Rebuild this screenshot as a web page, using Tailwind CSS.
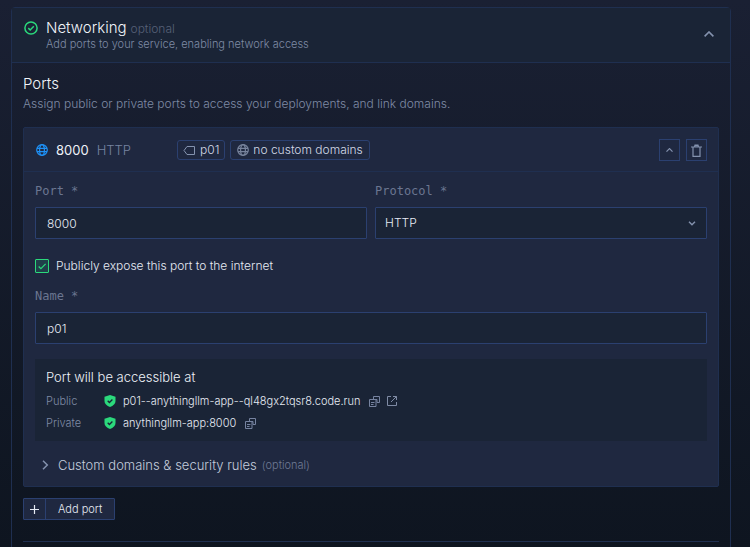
<!DOCTYPE html>
<html lang="en">
<head>
    <meta charset="UTF-8">
    <meta name="viewport" content="width=device-width, initial-scale=1.0">
    <title>Networking</title>
    <script src="https://cdn.jsdelivr.net/npm/@tailwindcss/browser@4"></script>
</head>
<body class="h-screen overflow-hidden bg-linear-to-b from-[#1a2033] to-[#0e1520] pt-[7px] pr-[19px] pl-[11px] font-['Inter',sans-serif] text-[13px] leading-4 font-light text-[#e6ebf4]">
    <!-- shared icons -->
    <svg class="hidden">
        <symbol id="globe" viewBox="0 0 12 12" fill="none" stroke="currentColor" stroke-width="1.2">
            <circle cx="6" cy="6" r="5.3" />
            <ellipse cx="6" cy="6" rx="2.4" ry="5.3" />
            <path d="M1 4.3h10M1 7.7h10" />
        </symbol>
        <symbol id="shield" viewBox="0 0 12 12">
            <path d="M6 0 11.5 1.8V6c0 2.7-2.2 4.8-5.5 6C2.7 10.8.5 8.7.5 6V1.8Z" fill="#2bd97c" />
            <path d="m3.7 5.8 1.7 1.7 3-3" fill="none" stroke="#1a2436" stroke-width="1.3" />
        </symbol>
        <symbol id="copy" viewBox="0 0 11 11" fill="none" stroke="currentColor">
            <path d="M4.5 3.500V.5h6v6H8M.5 3.500h3.500l3 0v7H.5ZM2 6.500h3.500M2 8.500h2.500M6.500 3.500h1.500v3" />
        </symbol>
    </svg>

    <section class="min-h-screen rounded-t border border-[#1f2f50]">
        <header class="flex items-center justify-between border-b border-[#1f2f50] bg-[#1a2436] pt-3 pr-4 pb-[10px] pl-3">
            <div class="flex gap-2">
                <svg class="mt-[1px] size-[14px] text-[#2bd97c]" viewBox="0 0 14 14" fill="none" stroke="currentColor" stroke-width="1.5">
                    <circle cx="7" cy="7" r="6.1" />
                    <path d="m4.3 7.1 1.9 1.9 3.6-3.7" />
                </svg>
                <div>
                    <h1 class="flex h-4 items-baseline gap-1 text-[15px] leading-4 text-[#f2f5fa]">Networking <span class="text-[12px] text-[#566076]">optional</span></h1>
                    <p class="text-[11px] leading-4 text-[#7f8ba5]">Add ports to your service, enabling network access</p>
                </div>
            </div>
            <button type="button" aria-label="Collapse networking" class="mb-1 text-[#8492ae]">
                <svg class="h-[6px] w-[10px]" viewBox="0 0 10 6" fill="none" stroke="currentColor" stroke-width="1.6"><path d="m.6 5.4 4.4-4.4 4.4 4.4" /></svg>
            </button>
        </header>

        <div class="px-[11px] pt-[11px]">
            <h2 class="text-[15px] leading-5 text-[#f2f5fa]">Ports</h2>
            <p class="mt-[2px] text-[12px] leading-4 text-[#7f8ba5]">Assign public or private ports to access your deployments, and link domains.</p>

            <div class="mt-[15px] rounded-xs border border-[#1f2f50] bg-[#1f2840]">
                <div class="flex items-center border-b border-[#1f2f50] pt-[11px] pr-[11px] pb-[10px] pl-3">
                    <div class="flex w-[141px] items-center gap-2">
                        <svg class="size-3 text-[#1e90f5]"><use href="#globe" /></svg>
                        <span class="font-normal text-[#eef2f8]">8000</span>
                        <span class="text-[#7683a0]">HTTP</span>
                    </div>
                    <div class="flex flex-1 gap-[5px] text-[12px] text-[#d3dae7]">
                        <span class="flex h-5 items-center gap-[5px] rounded-[3px] border border-[#2b4070] px-[5px]">
                            <svg class="h-[9px] w-3 text-[#8492ae]" viewBox="0 0 12 9" fill="none" stroke="currentColor"><path d="M4 .5h7.500v8H4l-3-4Z" /></svg>
                            p01
                        </span>
                        <span class="flex h-5 items-center gap-1 rounded-[3px] border border-[#2b4070] px-[6px]">
                            <svg class="size-3 text-[#77839c]"><use href="#globe" /></svg>
                            no custom domains
                        </span>
                    </div>
                    <div class="flex gap-[6px] text-[#8492ae]">
                        <button type="button" aria-label="Collapse port" class="flex h-[22px] w-[21px] items-center justify-center border border-[#2b4070]">
                            <svg class="h-1 w-[7px]" viewBox="0 0 7 4" fill="none" stroke="currentColor" stroke-width="1.2"><path d="m.5 3.600 3-3 3 3" /></svg>
                        </button>
                        <button type="button" aria-label="Delete port" class="flex h-[22px] w-[21px] items-center justify-center border border-[#2b4070]">
                            <svg class="h-[13px] w-[11px]" viewBox="0 0 11 13" fill="none" stroke="currentColor" stroke-width="1.2"><path d="M0 3h11M2 3v9.300h7V3M3.500 3l.5-2h3l.5 2M3.500 1.700h4" /></svg>
                        </button>
                    </div>
                </div>

                <div class="px-[11px] pt-[11px] pb-[13px]">
                    <div class="grid grid-cols-2 gap-2">
                        <div>
                            <label for="port" class="block font-['DejaVu_Sans_Mono',monospace] text-[12px] text-[#6b7690]">Port *</label>
                            <input id="port" type="text" value="8000" class="mt-2 block h-8 w-full rounded-[1px] border border-[#2b4070] bg-[#1a2436] px-[11px] text-[12px]">
                        </div>
                        <div>
                            <label for="protocol" class="block font-['DejaVu_Sans_Mono',monospace] text-[12px] text-[#6b7690]">Protocol *</label>
                            <div class="relative mt-2">
                                <select id="protocol" class="block h-8 w-full appearance-none rounded-[1px] border border-[#2b4070] bg-[#1a2436] px-[9px] text-[12px]">
                                    <option>HTTP</option>
                                    <option>TCP</option>
                                    <option>UDP</option>
                                </select>
                                <svg class="pointer-events-none absolute top-[14px] right-[11px] h-[5px] w-2 text-[#8492ae]" viewBox="0 0 8 5" fill="none" stroke="currentColor" stroke-width="1.4"><path d="m1 .8 3 3 3-3" /></svg>
                            </div>
                        </div>
                    </div>

                    <label class="mt-[19px] flex items-center gap-[7px] text-[12px]">
                        <span class="relative size-[14px]">
                            <input type="checkbox" checked class="block size-[14px] appearance-none rounded-[1px] border border-[#2bd97c] bg-[#20404a]">
                            <svg class="pointer-events-none absolute inset-0 size-[14px]" viewBox="0 0 14 14" fill="none" stroke="#2bd97c" stroke-width="1.2"><path d="m3.700 7.500 2.200 2.200 4.700-4.800" /></svg>
                        </span>
                        Publicly expose this port to the internet
                    </label>

                    <label for="name" class="mt-[14px] block font-['DejaVu_Sans_Mono',monospace] text-[12px] text-[#6b7690]">Name *</label>
                    <input id="name" type="text" value="p01" class="mt-2 block h-8 w-full rounded-[1px] border border-[#2b4070] bg-[#1a2436] px-[11px] text-[12px]">

                    <div class="mt-[15px] bg-[#1a2436] px-[11px] pt-[10px] pb-[7px] text-[11px]">
                        <h3 class="text-[13px] leading-4 text-[#eef2f8]">Port will be accessible at</h3>
                        <dl class="mt-[5px] leading-[22px]">
                            <div class="flex h-[22px] items-center">
                                <dt class="w-[58px] text-[#7f8ba5]">Public</dt>
                                <dd class="flex items-center">
                                    <svg class="mr-[7px] size-3"><use href="#shield" /></svg>
                                    p01--anythingllm-app--ql48gx2tqsr8.code.run
                                    <button type="button" aria-label="Copy public address" class="ml-[9px] text-[#7683a0]"><svg class="size-[11px]"><use href="#copy" /></svg></button>
                                    <a href="#" aria-label="Open public address" class="ml-[6px] text-[#7f8ba5]">
                                        <svg class="size-3" viewBox="0 0 12 12" fill="none" stroke="currentColor"><path d="M5 1.500H1.500v9h9V7M7 1.500h3.500V5M10.500 1.500 5 7" /></svg>
                                    </a>
                                </dd>
                            </div>
                            <div class="flex h-[22px] items-center">
                                <dt class="w-[58px] text-[#7f8ba5]">Private</dt>
                                <dd class="flex items-center">
                                    <svg class="mr-[7px] size-3"><use href="#shield" /></svg>
                                    anythingllm-app:8000
                                    <button type="button" aria-label="Copy private address" class="ml-[9px] text-[#7683a0]"><svg class="size-[11px]"><use href="#copy" /></svg></button>
                                </dd>
                            </div>
                        </dl>
                    </div>

                    <button type="button" class="mt-4 flex items-center pl-[7px] text-[13px] leading-4 text-[#c3ccdc]">
                        <svg class="mr-[9px] h-[10px] w-[7px] text-[#8492ae]" viewBox="0 0 7 10" fill="none" stroke="currentColor" stroke-width="1.5"><path d="m1 .8 4.300 4.200L1 9.200" /></svg>
                        Custom domains &amp; security rules
                        <span class="ml-[5px] text-[11px] text-[#6e7a94]">(optional)</span>
                    </button>
                </div>
            </div>

            <button type="button" class="mt-[11px] flex h-[22px] items-stretch rounded-[1px] border border-[#2b4070] bg-[#1f2840] text-[11px]">
                <span class="flex w-[22px] items-center justify-center border-r border-[#2b4070]">
                    <svg class="size-[9px]" viewBox="0 0 9 9" fill="none" stroke="currentColor" stroke-width="1.2"><path d="M4.500 0v9M0 4.500h9" /></svg>
                </span>
                <span class="flex items-center px-3">Add port</span>
            </button>
            <hr class="mt-[21px] border-[#1f2f50]">
        </div>
    </section>
</body>
</html>
